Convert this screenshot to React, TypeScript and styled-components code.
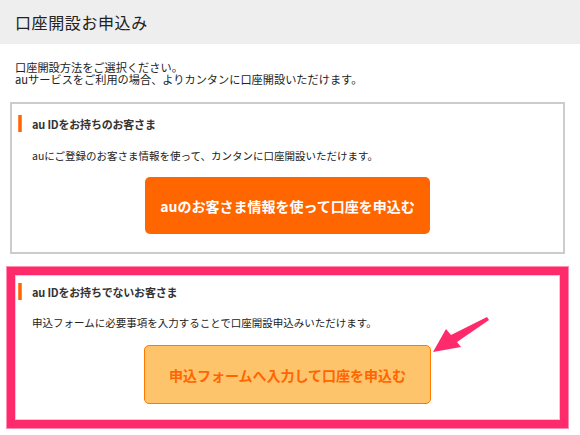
import React from "react";
import styled, { createGlobalStyle } from "styled-components";

const Global = createGlobalStyle`
  html, body { margin: 0; padding: 0; background: #fff; }
  body {
    font-family: "Noto Sans CJK JP", "Liberation Sans", sans-serif;
    color: #333;
  }
`;

const Page = styled.div`
  position: relative;
  width: 580px;
  height: 435px;
  overflow: hidden;
`;

const Header = styled.h1`
  margin: 0;
  height: 44px;
  line-height: 44px;
  padding-left: 15px;
  background: #eeeeee;
  font-size: 16px;
  font-weight: normal;
  letter-spacing: 0.6px;
  color: #222;
`;

const Intro = styled.p`
  margin: 0;
  padding: 17px 15px 0;
  font-size: 11.2px;
  line-height: 12px;
  color: #222;
`;

const Box = styled.section<{ $highlight?: boolean }>`
  box-sizing: border-box;
  display: flex;
  flex-direction: column;
  margin: ${(p) => (p.$highlight ? "13px 12px 0 7px" : "17px 15px 0 10px")};
  border: ${(p) => (p.$highlight ? "8px solid #ff2a6b" : "2px solid #cccccc")};
  box-shadow: ${(p) => (p.$highlight ? "0 0 0 1px #ff8fb0, inset 0 0 0 1px #ffc0d2" : "none")};
  padding: ${(p) => (p.$highlight ? "8px 0 16px" : "11px 0 18px")};
  --inset: ${(p) => (p.$highlight ? "3px" : "6px")};
  --text: ${(p) => (p.$highlight ? "17px" : "20px")};
`;

const Heading = styled.h2`
  display: flex;
  align-items: center;
  gap: 10px;
  margin: 0;
  padding-left: var(--inset);
  height: 17px;
  font-size: 11px;
  font-weight: bold;
  color: #333;
  letter-spacing: -0.2px;
`;

const Marker = styled.span`
  width: 4px;
  height: 17px;
  background: #ff6600;
  box-shadow: inset 1px 0 0 #ff8a3d, inset -1px 0 0 #ff8a3d;
`;

const Body = styled.p<{ $gap: number }>`
  margin: ${(p) => p.$gap}px 0 0;
  padding-left: var(--text);
  font-size: 10.5px;
  line-height: 14px;
  color: #222;
`;

const Button = styled.button<{ $primary?: boolean; $gap: number }>`
  align-self: center;
  margin-top: ${(p) => p.$gap}px;
  box-sizing: border-box;
  width: ${(p) => (p.$primary ? "285px" : "287px")};
  height: ${(p) => (p.$primary ? "57px" : "59px")};
  border-radius: 5px;
  border: ${(p) => (p.$primary ? "none" : "1px solid #ff7a00")};
  background: ${(p) => (p.$primary ? "#ff6600" : "#fdc46b")};
  color: ${(p) => (p.$primary ? "#ffffff" : "#ff6600")};
  font-family: "Noto Sans CJK JP", "Liberation Sans", sans-serif;
  font-size: 14px;
  font-weight: bold;
  letter-spacing: 0;
  cursor: pointer;
`;

const Arrow = styled.svg`
  position: absolute;
  left: 420px;
  top: 310px;
`;

export default function App() {
  return (
    <Page>
      <Global />
      <Header>口座開設お申込み</Header>
      <Intro>
        口座開設方法をご選択ください。
        <br />
        auサービスをご利用の場合、よりカンタンに口座開設いただけます。
      </Intro>
      <Box>
        <Heading>
          <Marker />
          au IDをお持ちのお客さま
        </Heading>
        <Body $gap={17}>auにご登録のお客さま情報を使って、カンタンに口座開設いただけます。</Body>
        <Button $primary $gap={14}>auのお客さま情報を使って口座を申込む</Button>
      </Box>
      <Box $highlight>
        <Heading>
          <Marker />
          au IDをお持ちでないお客さま
        </Heading>
        <Body $gap={16}>申込フォームに必要事項を入力することで口座開設申込みいただけます。</Body>
        <Button $gap={15}>申込フォームへ入力して口座を申込む</Button>
      </Box>
      <Arrow width="80" height="50" viewBox="0 0 80 50">
        <polygon
          points="13,42 26,19 31,25 67,7 69,10 37,32 41,37"
          fill="#ff2a6b"
        />
      </Arrow>
    </Page>
  );
}
